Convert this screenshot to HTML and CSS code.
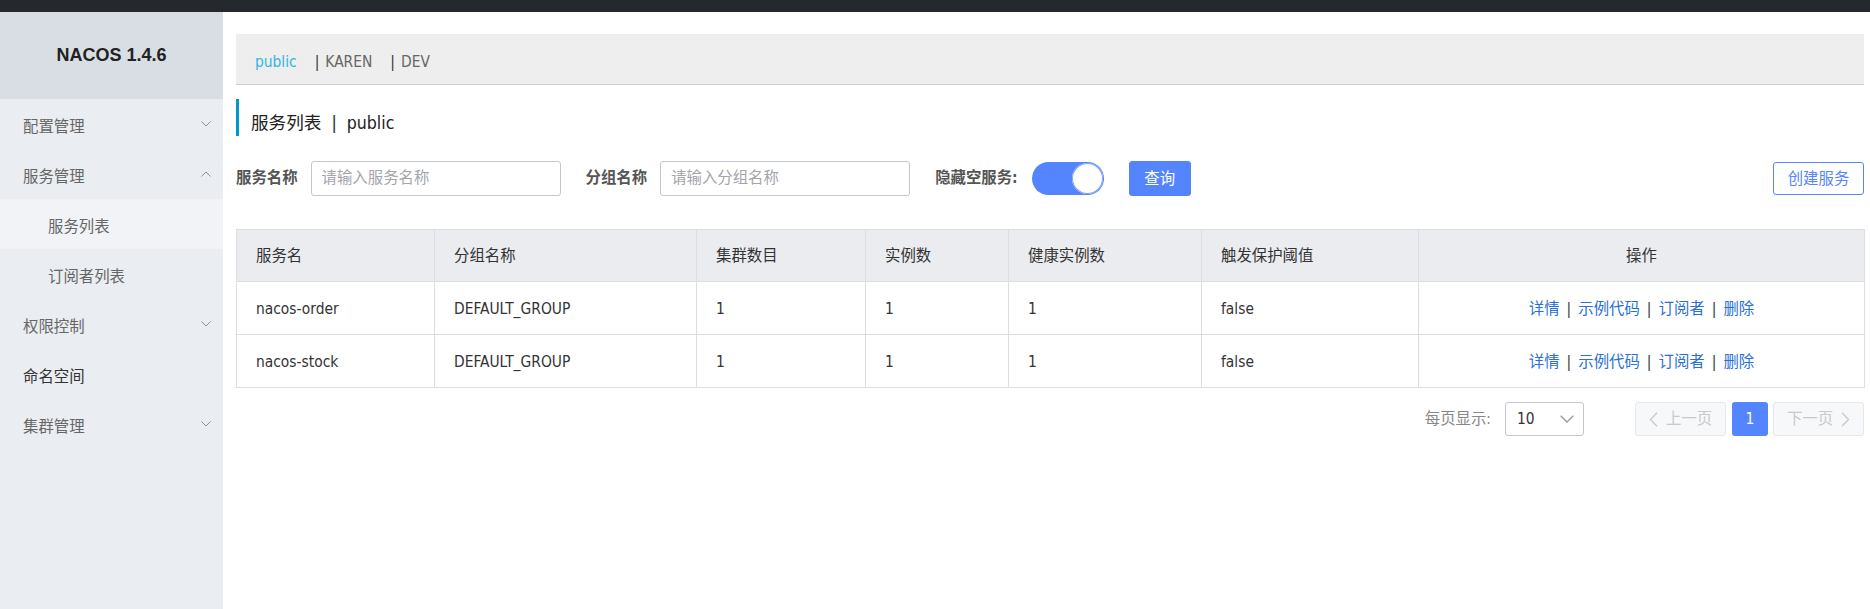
FILE: index.html
```html
<!DOCTYPE html>
<html lang="zh-CN">
<head>
<meta charset="utf-8">
<title>Nacos</title>
<link rel="stylesheet" href="styles.css">
</head>
<body>
<div class="topbar"></div>
<div class="layout">
  <aside class="sidebar">
    <div class="logo">NACOS 1.4.6</div>
    <ul class="menu">
      <li class="menu-item"><span class="label">配置管理</span><svg class="chev" width="10" height="6" viewBox="0 0 10 6"><path d="M0.5 0.5 L5 5 L9.5 0.5" fill="none" stroke="#8a8f99" stroke-width="1"/></svg></li>
      <li class="menu-item"><span class="label">服务管理</span><svg class="chev" width="10" height="6" viewBox="0 0 10 6"><path d="M0.5 5.5 L5 1 L9.5 5.5" fill="none" stroke="#8a8f99" stroke-width="1"/></svg></li>
      <li class="menu-item sub active"><span class="label">服务列表</span></li>
      <li class="menu-item sub"><span class="label">订阅者列表</span></li>
      <li class="menu-item"><span class="label">权限控制</span><svg class="chev" width="10" height="6" viewBox="0 0 10 6"><path d="M0.5 0.5 L5 5 L9.5 0.5" fill="none" stroke="#8a8f99" stroke-width="1"/></svg></li>
      <li class="menu-item dark"><span class="label">命名空间</span></li>
      <li class="menu-item"><span class="label">集群管理</span><svg class="chev" width="10" height="6" viewBox="0 0 10 6"><path d="M0.5 0.5 L5 5 L9.5 0.5" fill="none" stroke="#8a8f99" stroke-width="1"/></svg></li>
    </ul>
  </aside>
  <main class="main">
    <div class="ns-bar">
      <span class="ns current">public</span>
      <span class="ns"><span class="ns-sep">|</span>KAREN</span>
      <span class="ns"><span class="ns-sep">|</span>DEV</span>
    </div>
    <div class="page-title">服务列表<span class="title-sep">|</span>public</div>
    <div class="search">
      <label class="field-label">服务名称</label>
      <div class="input"><span class="placeholder">请输入服务名称</span></div>
      <label class="field-label gap">分组名称</label>
      <div class="input"><span class="placeholder">请输入分组名称</span></div>
      <label class="field-label gap">隐藏空服务:</label>
      <div class="switch"><span class="knob"></span></div>
      <button class="btn primary">查询</button>
      <button class="btn outline">创建服务</button>
    </div>
    <table class="grid">
      <colgroup>
        <col style="width:198px"><col style="width:262px"><col style="width:169px"><col style="width:143px"><col style="width:193px"><col style="width:217px"><col style="width:446px">
      </colgroup>
      <thead>
        <tr><th>服务名</th><th>分组名称</th><th>集群数目</th><th>实例数</th><th>健康实例数</th><th>触发保护阈值</th><th class="center">操作</th></tr>
      </thead>
      <tbody>
        <tr><td>nacos-order</td><td>DEFAULT_GROUP</td><td>1</td><td>1</td><td>1</td><td>false</td><td class="center"><a>详情</a><span class="bar">|</span><a>示例代码</a><span class="bar">|</span><a>订阅者</a><span class="bar">|</span><a>删除</a></td></tr>
        <tr><td>nacos-stock</td><td>DEFAULT_GROUP</td><td>1</td><td>1</td><td>1</td><td>false</td><td class="center"><a>详情</a><span class="bar">|</span><a>示例代码</a><span class="bar">|</span><a>订阅者</a><span class="bar">|</span><a>删除</a></td></tr>
      </tbody>
    </table>
    <div class="pager">
      <span class="pager-label">每页显示:</span>
      <div class="select"><span>10</span><svg width="14" height="8" viewBox="0 0 14 8"><path d="M0.7 0.7 L7 7 L13.3 0.7" fill="none" stroke="#999" stroke-width="1.3"/></svg></div>
      <div class="page-btn disabled prev"><svg width="9" height="15" viewBox="0 0 9 15"><path d="M8 0.8 L1.5 7.5 L8 14.2" fill="none" stroke="#c8c9cc" stroke-width="1.3"/></svg><span>上一页</span></div>
      <div class="page-btn current">1</div>
      <div class="page-btn disabled next"><span>下一页</span><svg width="9" height="15" viewBox="0 0 9 15"><path d="M1 0.8 L7.5 7.5 L1 14.2" fill="none" stroke="#c8c9cc" stroke-width="1.3"/></svg></div>
    </div>
  </main>
</div>
</body>
</html>
```

FILE: styles.css
```css
* { box-sizing: border-box; }
html, body { margin: 0; padding: 0; }
body {
  font-family: "DejaVu Sans Condensed", "Liberation Sans", "Noto Sans CJK SC", sans-serif;
  font-size: 15.4px;
  line-height: 1.3;
  color: #333;
  background: #fff;
  width: 1870px;
  height: 609px;
  overflow: hidden;
}
.topbar { height: 12px; background: #25292e; }
.layout { display: flex; height: 597px; }

/* sidebar */
.sidebar { width: 223px; flex: none; background: #eaedf1; }
.logo {
  height: 87px;
  background: #d9dee4;
  display: flex;
  align-items: center;
  justify-content: center;
  font-family: "Liberation Sans", "Noto Sans CJK SC", sans-serif;
  font-size: 18px;
  font-weight: bold;
  color: #222;
}
.menu { list-style: none; margin: 0; padding: 0; }
.menu-item {
  height: 50px;
  display: flex;
  align-items: center;
  justify-content: space-between;
  padding: 0 12px 0 23px;
  color: #666;
}
.menu-item .label { padding-top: 6px; }
.menu-item.sub { padding-left: 48px; }
.menu-item.active { background: #f2f3f7; }
.menu-item.dark { color: #333; }
.chev { display: block; }

/* main */
.main { flex: 1; min-width: 0; padding: 22px 6px 0 13px; }
.ns-bar {
  height: 51px;
  background: #eee;
  border-bottom: 1px solid #ccc;
  display: flex;
  align-items: center;
  padding: 6px 0 0 19px;
  gap: 18px;
  color: #666;
}
.ns.current { color: #33b6e0; }
.ns-sep { color: #333; margin-right: 6px; }

.page-title {
  margin-top: 14px;
  height: 37px;
  border-left: 3px solid #0099cc;
  padding: 12px 0 0 12px;
  font-size: 17.6px;
  line-height: 24px;
  color: #222;
}
.title-sep { margin: 0 10px; }

.search {
  margin-top: 25px;
  height: 35px;
  display: flex;
  align-items: center;
}
.field-label { font-weight: bold; color: #555; margin-right: 13px; }
.field-label.gap { margin-left: 25px; }
.input {
  width: 250px;
  height: 35px;
  border: 1px solid #c4c6cf;
  border-radius: 3px;
  display: flex;
  align-items: center;
  padding-left: 10px;
}
.placeholder { color: #a3a5ab; }
.switch {
  margin-left: 1px;
  width: 72px;
  height: 33px;
  border-radius: 17px;
  background: #5584ff;
  display: flex;
  align-items: center;
  justify-content: flex-end;
  padding-right: 1px;
}
.knob {
  width: 31px;
  height: 31px;
  border-radius: 50%;
  background: #fff;
  box-shadow: inset 0 0 0 1px #7aa0ff;
}
.btn {
  font: inherit;
  border-radius: 3px;
  cursor: pointer;
  padding: 0;
}
.btn.primary {
  margin-left: 25px;
  width: 62px;
  height: 35px;
  padding-top: 2px;
  background: #5584ff;
  border: 1px solid #5584ff;
  color: #fff;
}
.btn.outline {
  margin-left: auto;
  width: 91px;
  height: 33px;
  padding-top: 1px;
  background: #fff;
  border: 1px solid #5584ff;
  color: #5584ff;
}

/* table */
.grid {
  margin-top: 33px;
  width: 100%;
  table-layout: fixed;
  border-collapse: collapse;
  border: 1px solid #dcdee3;
}
.grid th, .grid td {
  border: 1px solid #dcdee3;
  padding: 0 0 0 19px;
  text-align: left;
  font-weight: normal;
  color: #333;
  white-space: nowrap;
}
.grid th { background: #ebecf0; height: 52px; padding-top: 2px; }
.grid td { height: 53px; padding-top: 2px; }
.grid .center { text-align: center; padding-left: 0; }
.grid a { color: #2a6fd6; }
.bar { color: #333; margin: 0 7px; }

/* pager */
.pager {
  margin-top: 14px;
  display: flex;
  justify-content: flex-end;
  align-items: center;
}
.pager-label { color: #888; margin-right: 14px; }
.select {
  width: 79px;
  height: 34px;
  border: 1px solid #c4c6cf;
  border-radius: 3px;
  display: flex;
  align-items: center;
  justify-content: space-between;
  padding: 0 9px 0 11px;
  color: #333;
}
.page-btn {
  height: 34px;
  border-radius: 3px;
  display: flex;
  align-items: center;
  justify-content: center;
  gap: 8px;
}
.page-btn.disabled {
  width: 91px;
  background: #f7f8fa;
  border: 1px solid #e6e7eb;
  color: #c8c9cc;
}
.page-btn.prev { margin-left: 51px; }
.page-btn.current {
  width: 36px;
  margin: 0 5px 0 6px;
  background: #5584ff;
  color: #fff;
}
```
